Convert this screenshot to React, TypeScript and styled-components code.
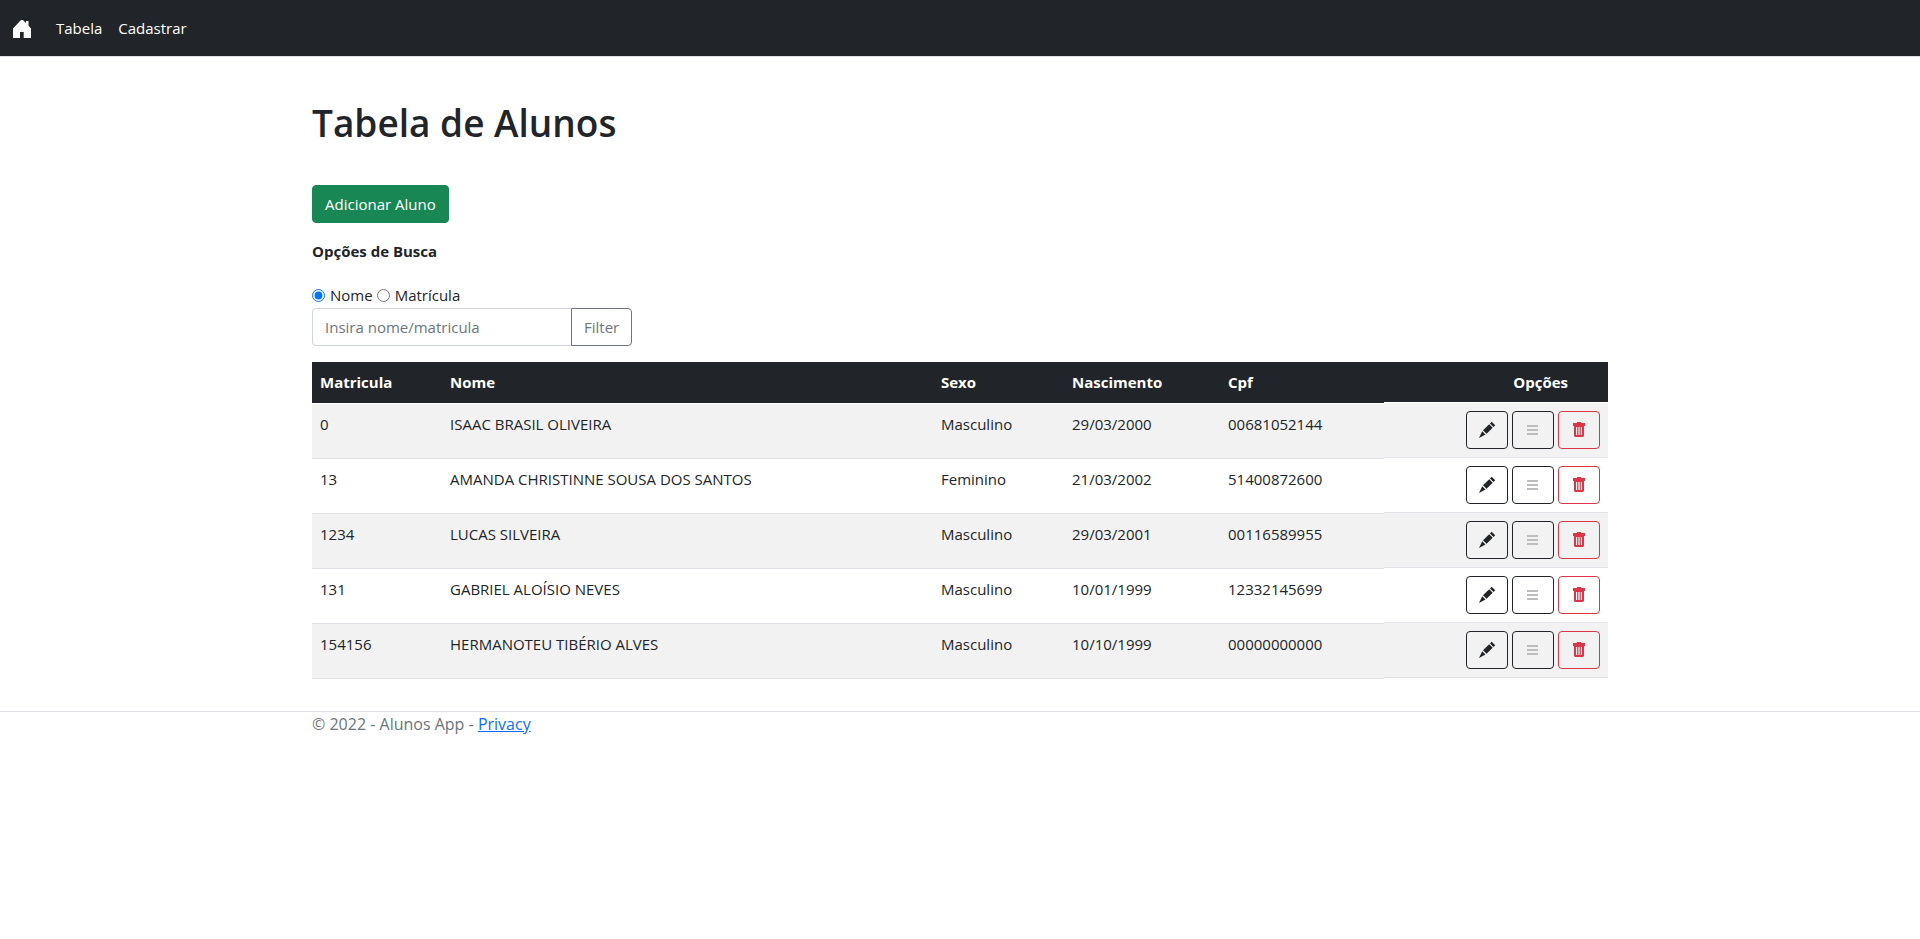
import React, { useState } from "react";
import styled, { createGlobalStyle, css } from "styled-components";

const GlobalStyle = createGlobalStyle`
  *, *::before, *::after { box-sizing: border-box; }
  body {
    margin: 0;
    font-family: "Segoe UI", "Open Sans", "Noto Sans", sans-serif;
    font-size: 15px;
    line-height: 24px;
    color: #212529;
    background: #fff;
  }
`;

const Navbar = styled.nav`
  display: flex;
  align-items: center;
  height: 57px;
  padding: 0 12px;
  background: #212529;
  border-bottom: 1px solid #dee2e6;
`;

const HomeLink = styled.a`
  display: flex;
  margin-right: 16px;
  color: #fff;
`;

const NavLink = styled.a`
  padding: 8px;
  color: #fff;
  text-decoration: none;
`;

const Container = styled.div`
  max-width: 1320px;
  margin: 0 auto;
  padding: 0 12px;
`;

const Title = styled.h1`
  margin: 0;
  padding: 42px 0 38px;
  font-size: 37px;
  line-height: 48px;
  font-weight: 600;
`;

const button = css`
  height: 38px;
  padding: 0 12px;
  border: 1px solid;
  border-radius: 4px;
  font: inherit;
  cursor: pointer;
`;

const AddButton = styled.button`
  ${button}
  display: block;
  color: #fff;
  background: #198754;
  border-color: #198754;
`;

const SearchForm = styled.form`
  margin-bottom: 16px;
`;

const SearchTitle = styled.p`
  margin: 16px 0 20px;
  font-weight: 700;
`;

const RadioRow = styled.div`
  display: flex;
  align-items: center;
  gap: 4px;
  margin-bottom: 1px;
`;

const RadioLabel = styled.label`
  display: flex;
  align-items: center;
  gap: 5px;
`;

const Radio = styled.input`
  width: 13px;
  height: 13px;
  margin: 0;
`;

const InputGroup = styled.div`
  display: flex;
`;

const SearchInput = styled.input`
  width: 260px;
  height: 38px;
  padding: 0 12px;
  border: 1px solid #ced4da;
  border-radius: 4px 0 0 4px;
  font: inherit;
  color: #212529;
  &::placeholder { color: #6c757d; opacity: 1; }
`;

const FilterButton = styled.button`
  ${button}
  margin-left: -1px;
  color: #6c757d;
  background: #fff;
  border-color: #6c757d;
  border-radius: 0 4px 4px 0;
`;

const Table = styled.table`
  width: 100%;
  border-collapse: collapse;
  table-layout: fixed;
`;

const Column = styled.col<{ $width?: number }>`
  width: ${(p) => (p.$width ? `${p.$width}px` : "auto")};
`;

const HeadCell = styled.th`
  padding: 8px;
  text-align: left;
  vertical-align: top;
  color: #fff;
  background: #212529;
  border-bottom: 1px solid #fff;
`;

const OptionsHead = styled(HeadCell)`
  display: flex;
  justify-content: flex-end;
  padding-right: 40px;
`;

const Cell = styled.td`
  padding: 8px;
  vertical-align: top;
  border-bottom: 1px solid #dee2e6;
`;

const OptionsCell = styled(Cell)`
  display: flex;
  justify-content: flex-end;
  gap: 4px;
`;

const Row = styled.tr`
  &:nth-child(odd) > td { background: #f2f2f2; }
`;

const IconButton = styled.button<{ $danger?: boolean }>`
  ${button}
  display: flex;
  align-items: center;
  justify-content: center;
  width: 42px;
  padding: 0;
  background: transparent;
  color: ${(p) => (p.$danger ? "#dc3545" : "#212529")};
  border-color: currentColor;
`;

const Footer = styled.footer`
  margin-top: 32px;
  border-top: 1px solid #dee2e6;
  font-size: 16px;
  color: #6c757d;
`;

const PrivacyLink = styled.a`
  color: #0d6efd;
`;

const HomeIcon = () => (
  <svg width="20" height="20" viewBox="0 0 20 20" fill="currentColor" aria-hidden="true">
    <path d="M9 2h2l3 3V3h2.500v4.500L19 10.500V20h-7.300v-6H8v6H1v-9.500z" />
  </svg>
);

const PencilIcon = () => (
  <svg width="18" height="18" viewBox="0 0 18 18" fill="currentColor" aria-hidden="true">
    <path d="M13.700.8 17.200 4.300 15.500 6 12 2.600zM11.200 3.300 14.700 6.800 8.600 12.800 5 9.200zM4.200 10.200 7.500 13.500 1 17z" />
  </svg>
);

const ListIcon = () => (
  <svg width="12" height="12" viewBox="0 0 12 12" fill="#bdbdc0" aria-hidden="true">
    <path d="M0 1h11v2H0zM0 5h11v2H0zM0 9h11v2H0z" />
  </svg>
);

const TrashIcon = () => (
  <svg width="14" height="16" viewBox="0 0 14 16" fill="currentColor" aria-hidden="true">
    <path fillRule="evenodd" d="M5 0h4v1h4v3h-1v10l-1 1H3l-1-1V4H1V1h4zM4 5v8h1.200V5zM6.400 5v8h1.200V5zM8.800 5v8H10V5z" />
  </svg>
);

const students = [
  ["0", "ISAAC BRASIL OLIVEIRA", "Masculino", "29/03/2000", "00681052144"],
  ["13", "AMANDA CHRISTINNE SOUSA DOS SANTOS", "Feminino", "21/03/2002", "51400872600"],
  ["1234", "LUCAS SILVEIRA", "Masculino", "29/03/2001", "00116589955"],
  ["131", "GABRIEL ALOÍSIO NEVES", "Masculino", "10/01/1999", "12332145699"],
  ["154156", "HERMANOTEU TIBÉRIO ALVES", "Masculino", "10/10/1999", "00000000000"],
];

export default function App() {
  const [field, setField] = useState("nome");
  return (
    <>
      <GlobalStyle />
      <Navbar>
        <HomeLink href="#" aria-label="Início"><HomeIcon /></HomeLink>
        <NavLink href="#">Tabela</NavLink>
        <NavLink href="#">Cadastrar</NavLink>
      </Navbar>
      <Container as="main">
        <Title>Tabela de Alunos</Title>
        <AddButton type="button">Adicionar Aluno</AddButton>
        <SearchForm onSubmit={(e) => e.preventDefault()}>
          <SearchTitle>Opções de Busca</SearchTitle>
          <RadioRow>
            <RadioLabel>
              <Radio type="radio" name="campo" checked={field === "nome"} onChange={() => setField("nome")} />
              Nome
            </RadioLabel>
            <RadioLabel>
              <Radio type="radio" name="campo" checked={field === "matricula"} onChange={() => setField("matricula")} />
              Matrícula
            </RadioLabel>
          </RadioRow>
          <InputGroup>
            <SearchInput type="text" placeholder="Insira nome/matricula" aria-label="Insira nome/matricula" />
            <FilterButton type="submit">Filter</FilterButton>
          </InputGroup>
        </SearchForm>
        <Table>
          <colgroup>
            <Column $width={130} />
            <Column />
            <Column $width={131} />
            <Column $width={156} />
            <Column $width={164} />
            <Column $width={224} />
          </colgroup>
          <thead>
            <tr>
              {["Matricula", "Nome", "Sexo", "Nascimento", "Cpf"].map((name) => (
                <HeadCell key={name} scope="col">{name}</HeadCell>
              ))}
              <OptionsHead scope="col">Opções</OptionsHead>
            </tr>
          </thead>
          <tbody>
            {students.map((student) => (
              <Row key={student[0]}>
                {student.map((value, i) => <Cell key={i}>{value}</Cell>)}
                <OptionsCell>
                  <IconButton type="button" aria-label="Editar"><PencilIcon /></IconButton>
                  <IconButton type="button" aria-label="Detalhes"><ListIcon /></IconButton>
                  <IconButton type="button" aria-label="Excluir" $danger><TrashIcon /></IconButton>
                </OptionsCell>
              </Row>
            ))}
          </tbody>
        </Table>
      </Container>
      <Footer>
        <Container>© 2022 - Alunos App - <PrivacyLink href="#">Privacy</PrivacyLink></Container>
      </Footer>
    </>
  );
}
